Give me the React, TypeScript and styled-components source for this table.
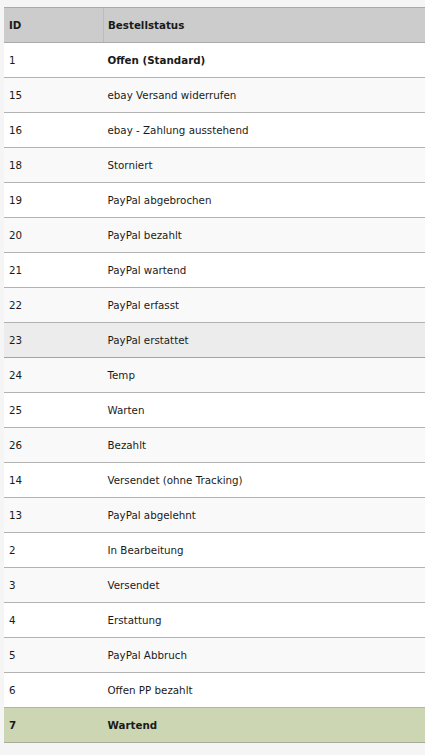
import React from "react";
import styled, { createGlobalStyle } from "styled-components";

const GlobalStyle = createGlobalStyle`
  html, body {
    margin: 0;
    padding: 0;
    background: #f5f5f5;
    overflow: hidden;
  }
  body {
    font-family: "DejaVu Sans", Verdana, sans-serif;
    font-size: 10.3px;
    color: #1a1a1a;
  }
`;

const Page = styled.div`
  padding: 7px 0 0 4px;
`;

const Table = styled.table`
  width: 100%;
  border-collapse: collapse;
  table-layout: fixed;
`;

const HeadCell = styled.th<{ $w?: number }>`
  width: ${(p) => (p.$w ? `${p.$w}px` : "auto")};
  height: 34px;
  padding: 0 0 0 5px;
  text-align: left;
  font-weight: bold;
  background: #cccccc;
  border-top: 1px solid #a9a9a9;
  border-bottom: 1px solid #a9a9a9;
  border-left: 1px solid #bcbcbc;
  &:first-child {
    border-left: none;
  }
  & + & {
    padding-left: 4px;
  }
`;

type Variant = "white" | "light" | "hover" | "active";

const bg: Record<Variant, string> = {
  white: "#ffffff",
  light: "#f9f9f9",
  hover: "#ececec",
  active: "#cdd6b3",
};

const Row = styled.tr<{ $variant: Variant }>`
  background: ${(p) => bg[p.$variant]};
  border-bottom: 1px solid
    ${(p) => (p.$variant === "active" ? "#a7ab9b" : p.$variant === "hover" ? "#a4a4a4" : "#b2b2b2")};
`;

const Cell = styled.td<{ $bold?: boolean }>`
  height: 34px;
  padding: 0 0 0 5px;
  white-space: nowrap;
  vertical-align: middle;
  font-weight: ${(p) => (p.$bold ? "bold" : "normal")};
  & + & {
    padding-left: 4px;
  }
`;

const rows: { id: number; label: string; bold?: boolean; boldId?: boolean }[] = [
  { id: 1, label: "Offen (Standard)", bold: true },
  { id: 15, label: "ebay Versand widerrufen" },
  { id: 16, label: "ebay - Zahlung ausstehend" },
  { id: 18, label: "Storniert" },
  { id: 19, label: "PayPal abgebrochen" },
  { id: 20, label: "PayPal bezahlt" },
  { id: 21, label: "PayPal wartend" },
  { id: 22, label: "PayPal erfasst" },
  { id: 23, label: "PayPal erstattet" },
  { id: 24, label: "Temp" },
  { id: 25, label: "Warten" },
  { id: 26, label: "Bezahlt" },
  { id: 14, label: "Versendet (ohne Tracking)" },
  { id: 13, label: "PayPal abgelehnt" },
  { id: 2, label: "In Bearbeitung" },
  { id: 3, label: "Versendet" },
  { id: 4, label: "Erstattung" },
  { id: 5, label: "PayPal Abbruch" },
  { id: 6, label: "Offen PP bezahlt" },
  { id: 7, label: "Wartend", bold: true, boldId: true },
];

export default function App() {
  return (
    <Page>
      <GlobalStyle />
      <Table>
        <thead>
          <tr>
            <HeadCell $w={94}>ID</HeadCell>
            <HeadCell>Bestellstatus</HeadCell>
          </tr>
        </thead>
        <tbody>
          {rows.map((r, i) => {
            const variant: Variant =
              i === rows.length - 1
                ? "active"
                : r.id === 23
                ? "hover"
                : i % 2 === 0
                ? "white"
                : "light";
            return (
              <Row key={r.id} $variant={variant}>
                <Cell $bold={r.boldId}>{r.id}</Cell>
                <Cell $bold={r.bold}>{r.label}</Cell>
              </Row>
            );
          })}
        </tbody>
      </Table>
    </Page>
  );
}
